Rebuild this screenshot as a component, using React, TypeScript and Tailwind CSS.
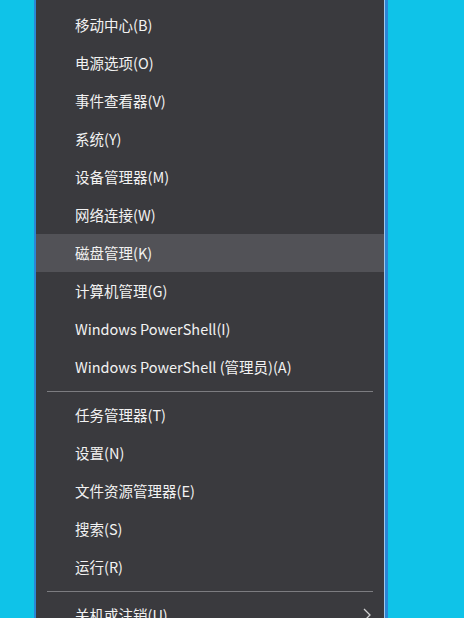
const GROUPS: string[][] = [
  [
    "移动中心(B)",
    "电源选项(O)",
    "事件查看器(V)",
    "系统(Y)",
    "设备管理器(M)",
    "网络连接(W)",
    "磁盘管理(K)",
    "计算机管理(G)",
    "Windows PowerShell(I)",
    "Windows PowerShell (管理员)(A)",
  ],
  ["任务管理器(T)", "设置(N)", "文件资源管理器(E)", "搜索(S)", "运行(R)"],
];

const ACTIVE = "磁盘管理(K)";

function Row({ label, sub }: { label: string; sub?: boolean }) {
  const active = label === ACTIVE;
  return (
    <div
      className={`h-[38px] flex items-center justify-between pl-[39px] pr-[12px] text-[14.5px] text-[#f2f2f2] ${
        active ? "bg-[#525257]" : ""
      }`}
    >
      <span>{label}</span>
      {sub && (
        <svg width="10" height="16" viewBox="0 0 10 16" fill="none">
          <path d="M2 2l6 6-6 6" stroke="#d0d0d0" strokeWidth="1.3" />
        </svg>
      )}
    </div>
  );
}

function Separator() {
  return (
    <div className="h-[10px] flex items-center px-[11px]">
      <div className="h-px w-full bg-[#7c7c80]" />
    </div>
  );
}

export default function App() {
  return (
    <div
      className="w-[464px] h-[618px] overflow-hidden bg-[#0fc3e8] flex"
      style={{ fontFamily: '"Noto Sans CJK SC", "Noto Sans", sans-serif' }}
    >
      <div className="w-[34px] shrink-0" />
      <div className="w-[2px] shrink-0 bg-[#2b86d6]" />
      <div className="w-[349px] shrink-0 bg-[#3a3a3e] pt-[6px] border-r border-[#9fc8ec]">
        {GROUPS[0].map((l) => (
          <Row key={l} label={l} />
        ))}
        <Separator />
        {GROUPS[1].map((l) => (
          <Row key={l} label={l} />
        ))}
        <Separator />
        <Row label="关机或注销(U)" sub />
      </div>
      <div className="w-[3px] shrink-0 bg-[#2b86d6]" />
    </div>
  );
}
